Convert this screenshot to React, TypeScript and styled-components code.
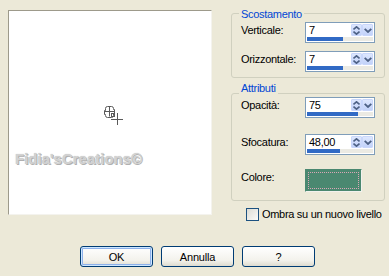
import React from "react";
import styled, { createGlobalStyle } from "styled-components";

const Global = createGlobalStyle`
  html, body { margin: 0; padding: 0; background: #ece9d8; }
  body {
    font-family: "Liberation Sans", Arial, sans-serif;
    font-size: 11px;
    color: #000;
    letter-spacing: -0.3px;
  }
`;

const Dialog = styled.div`
  width: 389px;
  height: 276px;
  background: #ece9d8;
  display: flex;
  flex-direction: column;
  overflow: hidden;
`;

const Top = styled.div`
  display: flex;
  align-items: flex-start;
  padding-left: 8px;
`;

const Preview = styled.div`
  position: relative;
  margin-top: 10px;
  width: 204px;
  height: 205px;
  box-sizing: border-box;
  background: #fff;
  border-top: 1px solid #9d9a8b;
  border-left: 1px solid #9d9a8b;
  border-right: 1px solid #f4f3ee;
  border-bottom: 1px solid #f4f3ee;
`;

const Cursor = styled.svg`
  position: absolute;
  left: 95px;
  top: 95px;
`;

const Watermark = styled.div`
  position: absolute;
  left: 6px;
  top: 140px;
  font-family: "Liberation Sans", Arial, sans-serif;
  font-weight: bold;
  font-size: 15px;
  line-height: 15px;
  letter-spacing: 0;
  color: #d2d2d2;
  text-shadow: 1px 1px 0 #b0b0b0, 0 0 1px #bdbdbd;
`;

const Side = styled.div`
  margin-left: 19px;
  width: 154px;
  display: flex;
  flex-direction: column;
`;

const Group = styled.div<{ $mt: number; $pt: number; $pb: number }>`
  position: relative;
  box-sizing: border-box;
  margin-top: ${(p) => p.$mt}px;
  padding: ${(p) => p.$pt}px 0 ${(p) => p.$pb}px 9px;
  border: 1px solid #d0d0bf;
  border-radius: 3px;
  display: flex;
  flex-direction: column;
`;

const Legend = styled.span<{ $top: number }>`
  position: absolute;
  left: 7px;
  top: ${(p) => p.$top}px;
  padding: 0 2px;
  background: #ece9d8;
  color: #0046d5;
  line-height: 13px;
`;

const Row = styled.div<{ $mt?: number }>`
  display: grid;
  grid-template-columns: 64px auto;
  align-items: start;
  margin-top: ${(p) => p.$mt ?? 0}px;
`;

const Label = styled.span`
  line-height: 13px;
  margin-top: 2px;
  white-space: nowrap;
`;

const Spin = styled.div`
  box-sizing: border-box;
  width: 70px;
  height: 21px;
  border: 1px solid #7f9db9;
  background: #fff;
  padding: 1px;
  display: flex;
  flex-direction: column;
`;

const SpinTop = styled.div`
  display: flex;
  height: 12px;
`;

const Value = styled.span`
  flex: 1;
  padding-left: 2px;
  line-height: 13px;
`;

const ArrowBtn = styled.span`
  box-sizing: border-box;
  width: 11px;
  height: 12px;
  display: flex;
  align-items: center;
  justify-content: center;
  background: linear-gradient(#dde7fe, #c2d2f9);
  border: 1px solid #c9d7fb;
  border-radius: 1px;
`;

const Track = styled.div`
  margin-top: 1px;
  height: 4px;
  background: #ebeae3;
`;

const Fill = styled.div`
  height: 100%;
  background: #316ac5;
`;

const Swatch = styled.div`
  box-sizing: border-box;
  width: 57px;
  height: 23px;
  background: #4a8870;
  border: 1px solid #4a8870;
  border-right-color: #f2f2ee;
  border-bottom-color: #f2f2ee;
  outline: 1px dotted #d9a7b6;
  outline-offset: -4px;
`;

const CheckRow = styled.label`
  display: flex;
  align-items: center;
  gap: 3px;
  margin-top: 7px;
  padding-left: 15px;
  line-height: 13px;
`;

const CheckBox = styled.span`
  box-sizing: border-box;
  width: 13px;
  height: 13px;
  border: 1px solid #1c5180;
  background: linear-gradient(135deg, #dcdcd5, #fbfbf9);
`;

const Buttons = styled.div`
  display: flex;
  gap: 8px;
  margin-top: 25px;
  padding-left: 80px;
`;

const Button = styled.button<{ $default?: boolean }>`
  box-sizing: border-box;
  width: 73px;
  height: 21px;
  padding: 0;
  border: 1px solid #003c74;
  border-radius: 3px;
  background: linear-gradient(#ffffff, #f3f2ec 70%, #dedbcf);
  font-family: "Liberation Sans", Arial, sans-serif;
  font-size: 11px;
  letter-spacing: -0.2px;
  color: #000;
  box-shadow: ${(p) =>
    p.$default ? "inset 0 0 0 1px #cee7ff, inset 0 0 0 2px #8eb1ea" : "none"};
`;

const SpinIcon = () => (
  <svg width="7" height="9" viewBox="0 0 7 9">
    <path d="M0.5 3.5 L3.5 0.8 L6.5 3.5" fill="none" stroke="#4d6185" strokeWidth="1.6" />
    <path d="M0.5 5.5 L3.5 8.2 L6.5 5.5" fill="none" stroke="#4d6185" strokeWidth="1.6" />
  </svg>
);

const DropIcon = () => (
  <svg width="8" height="5" viewBox="0 0 8 5">
    <path d="M0.7 0.8 L4 4 L7.3 0.8" fill="none" stroke="#4d6185" strokeWidth="1.8" />
  </svg>
);

const SpinField = ({ value, pct }: { value: string; pct: number }) => (
  <Spin>
    <SpinTop>
      <Value>{value}</Value>
      <ArrowBtn>
        <SpinIcon />
      </ArrowBtn>
      <ArrowBtn>
        <DropIcon />
      </ArrowBtn>
    </SpinTop>
    <Track>
      <Fill style={{ width: `${pct}%` }} />
    </Track>
  </Spin>
);

export default function App() {
  return (
    <Dialog>
      <Global />
      <Top>
        <Preview>
          <Cursor width="20" height="20" viewBox="0 0 20 20">
            <g fill="none" stroke="#5a5a5a" strokeWidth="1">
              <path d="M3.5 0.5 h4 a2 2 0 0 1 2 2 v1 h1 v4 h-1 v2 a2 2 0 0 1 -2 2 h-4 a2 2 0 0 1 -2 -2 v-1 h-1 v-4 h1 v-2 a2 2 0 0 1 2 -2 z" />
              <path d="M5.5 0.5 v10 M0.5 5.5 h10" />
              <rect x="7.5" y="7.5" width="3" height="3" />
              <path d="M7 13.5 h12 M13.5 7 v12" />
            </g>
          </Cursor>
          <Watermark>Fidia'sCreations©</Watermark>
        </Preview>
        <Side>
          <Group $mt={13} $pt={8} $pb={5}>
            <Legend $top={-6}>Scostamento</Legend>
            <Row>
              <Label>Verticale:</Label>
              <SpinField value="7" pct={55} />
            </Row>
            <Row $mt={8}>
              <Label>Orizzontale:</Label>
              <SpinField value="7" pct={55} />
            </Row>
          </Group>
          <Group $mt={15} $pt={3} $pb={8}>
            <Legend $top={-12}>Attributi</Legend>
            <Row>
              <Label>Opacità:</Label>
              <SpinField value="75" pct={78} />
            </Row>
            <Row $mt={16}>
              <Label>Sfocatura:</Label>
              <SpinField value="48,00" pct={50} />
            </Row>
            <Row $mt={14}>
              <Label>Colore:</Label>
              <Swatch />
            </Row>
          </Group>
          <CheckRow>
            <CheckBox />
            <span>Ombra su un nuovo livello</span>
          </CheckRow>
        </Side>
      </Top>
      <Buttons>
        <Button $default>OK</Button>
        <Button>Annulla</Button>
        <Button>?</Button>
      </Buttons>
    </Dialog>
  );
}
